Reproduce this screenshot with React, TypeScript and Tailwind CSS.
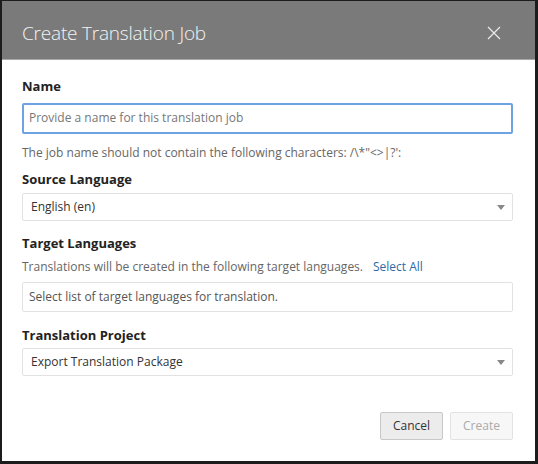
const Caret = () => (
  <svg width="8" height="5" viewBox="0 0 8 5" className="shrink-0">
    <path d="M0 0 L8 0 L4 5 Z" fill="#888" />
  </svg>
);

const Label = ({ children }: { children: React.ReactNode }) => (
  <div className="text-[13px] font-bold text-[#222]">{children}</div>
);

const App = () => {
  return (
    <div
      className="h-[464px] w-[538px] overflow-hidden border-t border-r-[3px] border-b-[3px] border-l-2 border-[#1c1c1c] bg-white"
      style={{ fontFamily: '"Open Sans", "Noto Sans", sans-serif' }}
    >
      <div className="flex h-[59px] items-center justify-between border-b border-[#a9a9a9] bg-[#7a7a7b] pt-[6px] pr-[34px] pl-5">
        <h1 className="text-[19px] font-light tracking-[-0.2px] text-[#f4f4f4]">
          Create Translation Job
        </h1>
        <svg width="14" height="14" viewBox="0 0 14 14">
          <path d="M1 1 L13 13 M13 1 L1 13" stroke="#ececec" strokeWidth="1.2" />
        </svg>
      </div>

      <div className="flex flex-col pt-[17px] pr-[22px] pl-5">
        <Label>Name</Label>
        <div className="mt-[6px] flex h-[31px] items-center rounded-[2px] border-2 border-[#6ea2e3] px-[5px] text-[12px] text-[#777]">
          Provide a name for this translation job
        </div>
        <div className="mt-[10px] text-[12px] text-[#666]">
          The job name should not contain the following characters: /\*"&lt;&gt;|?':
        </div>

        <div className="mt-[8px]">
          <Label>Source Language</Label>
        </div>
        <div className="mt-[4px] flex h-[28px] items-center justify-between rounded-[2px] border border-[#e2e2e2] pr-[7px] pl-[8px] text-[12px] text-[#333]">
          <span>English (en)</span>
          <Caret />
        </div>

        <div className="mt-[13px]">
          <Label>Target Languages</Label>
        </div>
        <div className="mt-[4px] flex gap-[10px] text-[12px]">
          <span className="text-[#666]">
            Translations will be created in the following target languages.
          </span>
          <span className="text-[#2e6aa8]">Select All</span>
        </div>
        <div className="mt-[6px] flex h-[30px] items-center rounded-[2px] border border-[#e2e2e2] px-[6px] text-[12px] text-[#555]">
          Select list of target languages for translation.
        </div>

        <div className="mt-[14px]">
          <Label>Translation Project</Label>
        </div>
        <div className="mt-[3px] flex h-[28px] items-center justify-between rounded-[2px] border border-[#e2e2e2] pr-[7px] pl-[8px] text-[12px] text-[#333]">
          <span>Export Translation Package</span>
          <Caret />
        </div>

        <div className="mt-[36px] flex justify-end gap-[7px]">
          <button className="h-[28px] w-[63px] rounded-[2px] border border-[#c8c8c8] bg-[#ececec] text-[12px] text-[#333]">
            Cancel
          </button>
          <button className="h-[28px] w-[63px] rounded-[2px] border border-[#e3e3e3] bg-[#f7f7f7] text-[12px] text-[#aaa]">
            Create
          </button>
        </div>
      </div>
    </div>
  );
};

export default App;
